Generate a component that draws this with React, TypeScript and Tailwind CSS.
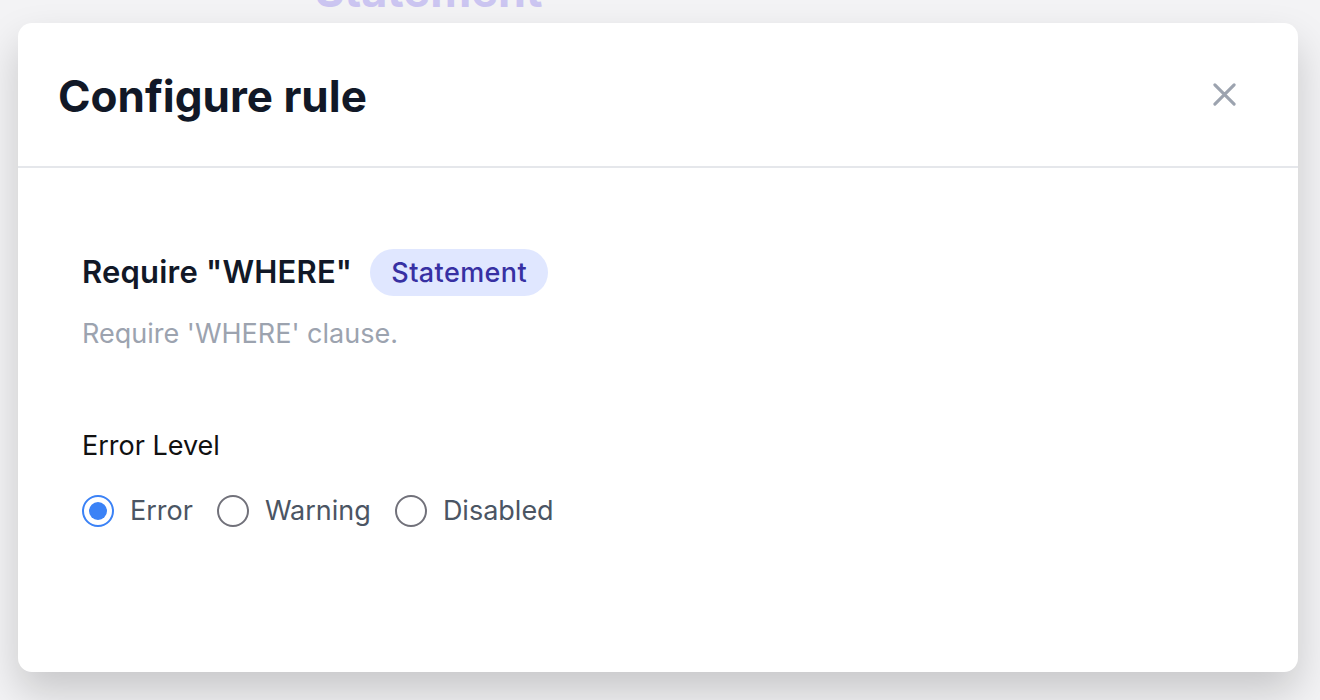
import React, { useState } from "react";

const levels = ["Error", "Warning", "Disabled"];

const App = () => {
  const [level, setLevel] = useState("Error");

  return (
    <div
      className="relative h-[700px] w-[1320px] overflow-hidden bg-[#f3f3f5]"
      style={{ fontFamily: "Inter, 'Liberation Sans', sans-serif" }}
    >
      <div className="absolute left-[315px] top-[-36px] text-[45px] font-bold leading-[54px] text-[#cbc5f1]">
        Statement
      </div>

      <div className="relative ml-[18px] mt-[23px] flex h-[649px] w-[1280px] flex-col rounded-[14px] bg-white shadow-[0_20px_40px_rgba(0,0,0,0.18)]">
        <div className="flex h-[145px] items-center justify-between border-b-2 border-[#e5e7eb] pl-[40px] pr-[57px]">
          <h1 className="mt-[3px] text-[44px] font-bold text-[#111827]">Configure rule</h1>
          <button className="text-[#9ca3af]">
            <svg width="33" height="33" viewBox="0 0 24 24" fill="none" stroke="currentColor" strokeWidth="2.3" strokeLinecap="round">
              <path d="M5 5l14 14M19 5L5 19" />
            </svg>
          </button>
        </div>

        <div className="px-[64px] pt-[81px]">
          <div className="flex h-[47px] items-center gap-[18px]">
            <span className="text-[31px] font-semibold tracking-[0.2px] text-[#111827]">Require "WHERE"</span>
            <span className="rounded-full bg-[#e0e7ff] px-[21px] py-[8px] text-[27px] font-medium leading-[31px] tracking-[0.4px] text-[#3730a3]">
              Statement
            </span>
          </div>
          <p className="mt-[22px] text-[27px] leading-[32px] text-[#9ca3af]">Require 'WHERE' clause.</p>

          <div className="mt-[80px] text-[27px] leading-[32px] text-[#111]">Error Level</div>
          <div className="mt-[29px] flex items-center gap-[24px]">
            {levels.map((l) => (
              <label key={l} className="flex cursor-pointer items-center gap-[16px]" onClick={() => setLevel(l)}>
                {level === l ? (
                  <span className="flex h-[32px] w-[32px] items-center justify-center rounded-full border-[2.5px] border-[#3b82f6]">
                    <span className="h-[18px] w-[18px] rounded-full bg-[#3b82f6]" />
                  </span>
                ) : (
                  <span className="h-[32px] w-[32px] rounded-full border-[2px] border-[#71717a]" />
                )}
                <span className="text-[27px] text-[#4b5563]">{l}</span>
              </label>
            ))}
          </div>
        </div>
      </div>
    </div>
  );
};

export default App;
